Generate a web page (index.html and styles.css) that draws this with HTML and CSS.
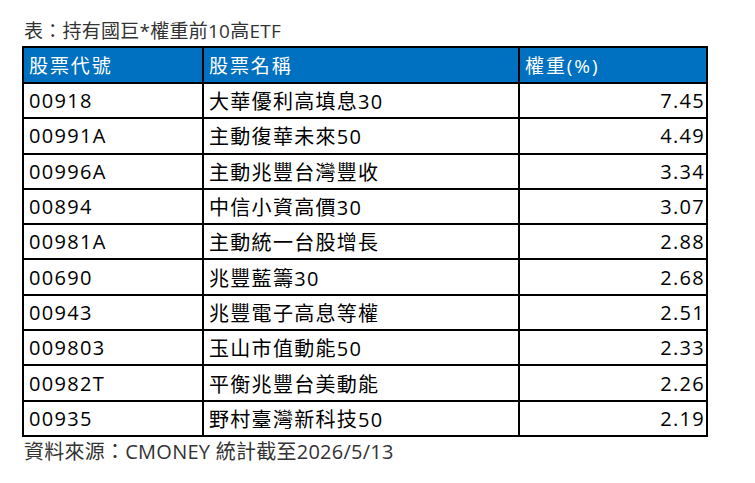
FILE: index.html
```html
<!DOCTYPE html>
<html lang="zh-Hant">
<head>
<meta charset="utf-8">
<link rel="stylesheet" href="styles.css">
</head>
<body>
<div class="page">
  <div class="title">表：持有國巨*權重前10高ETF</div>
  <table class="etf">
    <thead>
      <tr><th class="c1">股票代號</th><th class="c2">股票名稱</th><th class="c3">權重(%)</th></tr>
    </thead>
    <tbody>
      <tr><td>00918</td><td>大華優利高填息30</td><td class="num">7.45</td></tr>
      <tr><td>00991A</td><td>主動復華未來50</td><td class="num">4.49</td></tr>
      <tr><td>00996A</td><td>主動兆豐台灣豐收</td><td class="num">3.34</td></tr>
      <tr><td>00894</td><td>中信小資高價30</td><td class="num">3.07</td></tr>
      <tr><td>00981A</td><td>主動統一台股增長</td><td class="num">2.88</td></tr>
      <tr><td>00690</td><td>兆豐藍籌30</td><td class="num">2.68</td></tr>
      <tr><td>00943</td><td>兆豐電子高息等權</td><td class="num">2.51</td></tr>
      <tr><td>009803</td><td>玉山市值動能50</td><td class="num">2.33</td></tr>
      <tr><td>00982T</td><td>平衡兆豐台美動能</td><td class="num">2.26</td></tr>
      <tr><td>00935</td><td>野村臺灣新科技50</td><td class="num">2.19</td></tr>
    </tbody>
  </table>
  <div class="source">資料來源：CMONEY 統計截至2026/5/13</div>
</div>
</body>
</html>
```

FILE: styles.css
```css
html, body {
  margin: 0;
  padding: 0;
  background: #ffffff;
}
body {
  font-family: "Open Sans", "Noto Sans CJK TC", sans-serif;
}
.page {
  padding: 17px 0 0 22px;
}
.title {
  font-size: 19px;
  line-height: 28px;
  letter-spacing: 0.25px;
  color: #333333;
  padding-left: 2px;
  height: 29px;
}
.etf {
  border-collapse: collapse;
  width: 686px;
  table-layout: fixed;
}
.etf th, .etf td {
  border: 2px solid #000;
  padding: 0 3px 0 5px;
  font-weight: normal;
  text-align: left;
  white-space: nowrap;
}
.etf th {
  background: #0070c0;
  color: #ffffff;
  font-size: 19px;
  letter-spacing: 1.9px;
  height: 34px;
}
.etf td {
  color: #000000;
  font-size: 20px;
  letter-spacing: 1.3px;
  height: 33.3px;
}
.etf .c1 { width: 170px; }
.etf .c2 { width: 306px; }
.etf .c3 { width: auto; }
.etf td.num {
  text-align: right;
  padding-right: 1px;
}
.source {
  font-size: 20px;
  line-height: 28px;
  letter-spacing: 0.25px;
  color: #333333;
  padding-left: 2px;
  padding-top: 1px;
}
```
